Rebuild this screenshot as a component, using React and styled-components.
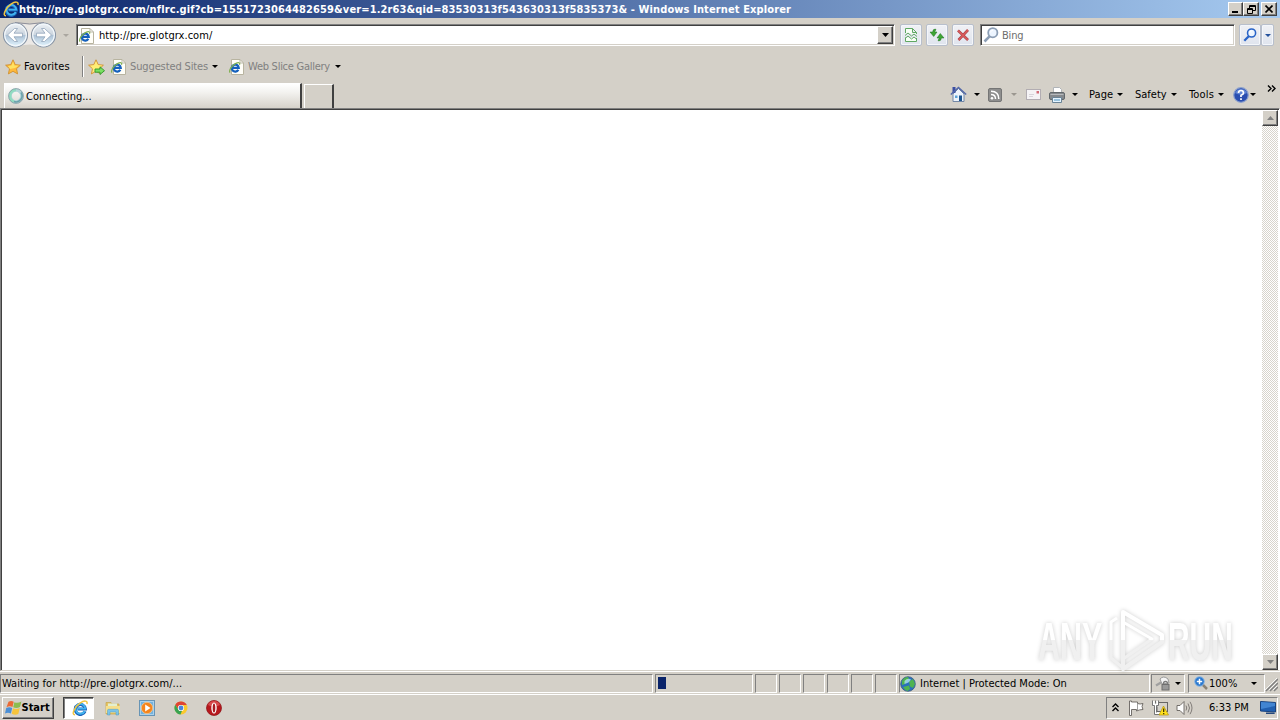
import React from 'react'
import styled, { createGlobalStyle } from 'styled-components'

const GlobalStyle = createGlobalStyle`
    * {
        box-sizing: border-box;
    }
    body {
        margin: 0;
        overflow: hidden;
        font-family: "DejaVu Sans Condensed", "DejaVu Sans", sans-serif;
        font-stretch: condensed;
        font-size: 11px;
        color: #000;
    }
    svg {
        display: block;
        flex: none;
    }
`
const Desktop = styled.div`
    width: 1280px;
    height: 720px;
    display: flex;
    flex-direction: column;
    background: #d4d0c8;
    overflow: hidden;
`
const Row = styled.div`
    display: flex;
    align-items: center;
`
const Label = styled.span`
    flex: none;
    white-space: pre;
    line-height: 14px;
    width: ${(props) => props.$width}px;
    letter-spacing: ${(props) => props.$spacing || 0}px;
    font-weight: ${(props) => (props.$bold ? 'bold' : 'normal')};
    color: ${(props) => props.$color || '#000'};
    margin-left: ${(props) => props.$left || 0}px;
    padding-top: ${(props) => props.$drop || 0}px;
`
const Slot = styled.span`
    flex: none;
    display: flex;
    margin-left: ${(props) => props.$left || 0}px;
    margin-top: ${(props) => props.$top || 0}px;
`
const Arrow = styled.span`
    flex: none;
    width: 0;
    height: 0;
    border: 3px solid transparent;
    border-bottom: 0;
    border-top-color: ${(props) => props.$color || '#000'};
    margin-left: ${(props) => props.$left || 0}px;
`

const TitleBar = styled(Row)`
    height: 18px;
    padding: 0 3px 0 3px;
    background: linear-gradient(90deg, #0a246a, #a6caf0);
`
const WindowButtons = styled(Row)`
    margin-left: auto;
`
const Classic = styled.span`
    flex: none;
    display: flex;
    align-items: center;
    justify-content: center;
    width: ${(props) => props.$width}px;
    height: ${(props) => props.$height}px;
    margin-left: ${(props) => props.$left || 0}px;
    background: #d4d0c8;
    border: 1px solid;
    border-color: #fff #404040 #404040 #fff;
    box-shadow: inset -1px -1px #808080;
`

const AddressRow = styled(Row)`
    height: 34px;
    padding-left: 2px;
`
const Field = styled(Row)`
    flex: none;
    width: ${(props) => props.$width}px;
    height: 22px;
    margin-left: ${(props) => props.$left}px;
    background: #fff;
    border: 1px solid;
    border-color: #808080 #fff #fff #808080;
    box-shadow: inset 1px 1px #404040, inset -1px -1px #d4d0c8;
`
const ToolButton = styled.span`
    flex: none;
    display: flex;
    align-items: center;
    justify-content: center;
    width: ${(props) => props.$width || 22}px;
    height: 22px;
    margin-left: ${(props) => props.$left || 0}px;
    border: 1px solid #b8bfcc;
    border-radius: 2px;
    background: linear-gradient(#f0f1f5, #dfe4ee);
    box-shadow: inset 0 0 0 1px #f4f6fa;
`

const FavoritesRow = styled(Row)`
    height: 29px;
    padding-left: 5px;
`
const Divider = styled.span`
    width: 2px;
    height: 21px;
    margin-left: 12px;
    background: linear-gradient(90deg, #808080 50%, #fff 50%);
`

const TabRow = styled.div`
    display: flex;
    align-items: flex-end;
    height: 27px;
    padding-left: 4px;
`
const Tab = styled(Row)`
    width: 298px;
    height: 25px;
    padding-left: 3px;
    background: linear-gradient(#fff, #f3f2ef 35%, #d6d2ca);
    border-top: 1px solid #fff;
    border-left: 1px solid #fff;
    border-right: 2px solid #404040;
`
const NewTab = styled.div`
    width: 30px;
    height: 24px;
    margin-left: 2px;
    border-top: 1px solid #fff;
    border-left: 1px solid #fff;
    border-right: 2px solid #404040;
`
const CommandBar = styled(Row)`
    height: 27px;
    margin-left: 616px;
`

const Viewport = styled.div`
    position: relative;
    display: flex;
    justify-content: flex-end;
    height: 563px;
    background: #fff;
    border: 1px solid;
    border-color: #808080 #fff #d4d0c8 #808080;
    box-shadow: inset 1px 1px #404040;
    padding: 1px 1px 0 0;
`
const ScrollTrack = styled.div`
    display: flex;
    flex-direction: column;
    justify-content: space-between;
    width: 16px;
    background: repeating-conic-gradient(#fff 0 25%, #d8d4cc 0 50%) 0 0 / 2px 2px;
`
const Watermark = styled.svg`
    position: absolute;
    left: 1029px;
    top: 494px;
    filter: drop-shadow(0 0 2px rgba(0, 0, 0, 0.2));
`

const StatusBar = styled(Row)`
    height: 24px;
    border-top: 1px solid #fff;
    border-bottom: 1px solid #fff;
`
const Pane = styled(Row)`
    flex: none;
    width: ${(props) => props.$width}px;
    height: 19px;
    margin-left: ${(props) => props.$left || 0}px;
    border: 1px solid;
    border-color: #808080 #fff #fff #808080;
`
const Progress = styled.span`
    width: 8px;
    height: 12px;
    margin-left: 2px;
    background: #0a246a;
`

const Taskbar = styled(Row)`
    height: 25px;
    padding: 0 2px;
`
const ActiveTask = styled.span`
    flex: none;
    display: flex;
    align-items: center;
    justify-content: center;
    width: 31px;
    height: 22px;
    margin-left: 9px;
    padding-left: 3px;
    background: #fff;
    border: 1px solid;
    border-color: #404040 #fff #fff #404040;
    box-shadow: inset 1px 1px #808080;
`
const Tray = styled(Row)`
    width: 172px;
    height: 22px;
    margin-left: auto;
    border: 1px solid;
    border-color: #808080 #fff #fff #808080;
`

const IeLetter = () => (
    <svg width="16" height="16" viewBox="0 0 16 16" fill="none">
        <path d="M13 11.200A5 5 0 1 1 13.300 9H5.500" stroke="#1b62b8" strokeWidth="3.200" />
        <path d="M12.800 11A4.900 4.900 0 1 1 13.300 8.700H5.500" stroke="#41b4ef" strokeWidth="1.800" />
        <path d="M3 14.800C-1 15 2.500 7 8 3.200 12 .4 16 .2 14.900 4" stroke="#f1c540" strokeWidth="1.500" />
    </svg>
)

const PageIcon = () => (
    <svg width="16" height="16" viewBox="0 0 16 16" fill="none">
        <path d="M2.500.5H11l3.500 3.500v11.500h-12z" fill="#fffef8" stroke="#b8b4a0" />
        <path d="M11 .5V4h3.500" stroke="#bbb9aa" />
        <path d="M9.300 10.800A3.500 3.500 0 1 1 9.700 8.800H3.500" stroke="#1560bd" strokeWidth="2.300" />
        <path d="M1.200 13.500C-.8 12.500 2.500 6.500 6.500 4.600c3-1.500 4.800-1.200 4 1.200" stroke="#7fb04f" strokeWidth="1.200" />
    </svg>
)

const NavButtons = () => (
    <svg width="56" height="28" viewBox="0 0 56 28" fill="none">
        <defs>
            <linearGradient id="glass" x1="0" y1="0" x2="0" y2="1">
                <stop offset="0" stopColor="#eef2f6" />
                <stop offset=".48" stopColor="#ccd5df" />
                <stop offset=".52" stopColor="#adc2d6" />
                <stop offset="1" stopColor="#e4f6ff" />
            </linearGradient>
        </defs>
        <path d="M13 1.500Q27 5 42 1.500L44 26Q27 21 13 26z" fill="#ece9e6" />
        <path d="M13 1.500q15 3 29 0" stroke="#8e8f9b" />
        {[13.5, 41.5].map((cx) => (
            <g key={cx}>
                <circle cx={cx} cy="14" r="12" fill="url(#glass)" stroke="#8995a5" strokeWidth="1.100" />
                <circle cx={cx} cy="14" r="10.800" stroke="#f2f7fb" strokeWidth="1.200" />
            </g>
        ))}
        <g fill="#fff" stroke="#92a5ba" strokeWidth=".8">
            <path d="M5.500 14l7-6.500h3l-3.500 4.700h8.500v3.600H12l3.500 4.700h-3z" />
            <path d="M49.500 14l-7-6.500h-3l3.500 4.700h-8.500v3.600H43l-3.500 4.700h3z" />
        </g>
    </svg>
)

const Star = ({ add }) => (
    <svg width="17" height="16" viewBox="0 0 17 16">
        <path d="M8 .8l2.200 4.800 5.200.6-3.900 3.500 1.100 5.200L8 12.300l-4.600 2.600 1.100-5.200L.6 6.200l5.200-.6z" fill={add ? '#ffe981' : '#ffb93b'} stroke="#cf9030" strokeWidth=".9" />
        <path d="M8 2.500l1.400 4H14l-4 2.500-5 1L3 7l3.500-.5z" fill="#fff06f" opacity=".75" />
        {add && <path d="M7 10h5V7.800l4.500 3.900-4.500 3.800v-2.300H7z" fill="#7be062" stroke="#2f9428" strokeWidth=".9" />}
    </svg>
)

const Spinner = () => (
    <svg width="16" height="16" viewBox="0 0 16 16" fill="none">
        <circle cx="8" cy="8" r="6" stroke="#b4d4d8" strokeWidth="3.600" />
        <path d="M8 2a6 6 0 0 0-2 11.600" stroke="#8fdcc0" strokeWidth="2.400" />
        <path d="M6 13.500A6 6 0 0 0 13 4.500" stroke="#6aa3ac" strokeWidth="1.600" />
        <circle cx="8" cy="8" r="7.400" stroke="#7f9299" strokeWidth=".7" />
    </svg>
)

const Magnifier = ({ color, size = 16 }) => (
    <svg width={size} height={size} viewBox="0 0 16 16" fill="none">
        <path d="M6.800 9.200L1.500 14.500" stroke={color} strokeWidth="2.600" />
        <circle cx="9.800" cy="5.700" r="4.600" fill="#edf5ff" stroke={color} strokeWidth="1.800" />
        <path d="M7.500 5.500q.2-2.200 2.500-2.300" stroke="#fff" />
    </svg>
)

const CompatIcon = () => (
    <svg width="14" height="16" viewBox="0 0 14 16" fill="none" stroke="#5fa863">
        <path d="M1.500 6V1.500h7l4 4V7M8.500 1.500v4h4M1.500 10.500v4h11V11" fill="#f8fff6" />
        <path d="M1 8.500l3-2.500 3.500 3L10 7l3 2.500M1 11.500l3-2.500 3.500 3L10 10l3 2.500" />
    </svg>
)

const RefreshIcon = () => (
    <svg width="16" height="14" viewBox="0 0 16 14" fill="#3fa534" stroke="#1d7320" strokeWidth=".5">
        <path d="M6.500 1Q3.700 1 3.700 4H1l3.700 4.500L8 4H5.800Q5.800 2.500 7 2z" />
        <path d="M9.500 13q2.800 0 2.800-3H15l-3.700-4.500L8 10h2.200q0 1.500-1.200 2z" />
    </svg>
)

const StopIcon = () => (
    <svg width="14" height="14" viewBox="0 0 14 14">
        <path d="M2 2.500L12 12M12 2L2.500 12" stroke="#a84448" strokeWidth="2.600" />
        <path d="M2 2.500L12 12M12 2L2.500 12" stroke="#dc5a5c" strokeWidth="1.500" />
    </svg>
)

const HomeIcon = () => (
    <svg width="17" height="17" viewBox="0 0 17 17">
        <path d="M3 8v7.500h11V8L8.500 2.500z" fill="#edf3fb" stroke="#7488a6" />
        <path d="M2.500 1h3v6h-3z" fill="#3b4ea3" />
        <path d="M.8 8.500l7.700-7 7.700 7" fill="none" stroke="#5267a8" strokeWidth="1.500" />
        <path d="M9 9.500h3V15H9z" fill="#1d5591" />
        <path d="M5 9.500h2.500V12H5z" fill="#5ca4d8" />
    </svg>
)

const FeedIcon = () => (
    <svg width="14" height="14" viewBox="0 0 14 14" fill="none">
        <rect x=".5" y=".5" width="13" height="13" rx="1.500" fill="#8e8e8e" stroke="#757575" />
        <circle cx="4" cy="10.300" r="1.300" fill="#fff" />
        <path d="M3 6.500q4.500 0 4.500 4.500M3 3.200q7.800 0 7.800 7.800" stroke="#fff" strokeWidth="1.500" />
    </svg>
)

const MailIcon = () => (
    <svg width="15" height="11" viewBox="0 0 15 11">
        <rect x=".5" y=".5" width="14" height="10" fill="#f5f3f5" stroke="#b2adb2" />
        <path d="M10.500 2h2.500v2.500h-2.500z" fill="#d26a76" />
        <path d="M3 5.500h5M3 7.500h4" stroke="#d8d4da" />
    </svg>
)

const PrinterIcon = () => (
    <svg width="16" height="16" viewBox="0 0 16 16">
        <path d="M4.500 7V.5h6l2 2V7" fill="#fff" stroke="#b0b4b8" />
        <rect x=".5" y="5.500" width="15" height="7" rx="1.500" fill="#85898d" stroke="#62686c" />
        <path d="M1.500 7.500h13" stroke="#b7babd" />
        <path d="M3.500 10.500h9v5h-9z" fill="#e5f4ff" stroke="#6b8496" />
        <path d="M5 13h6" stroke="#4c91bc" />
    </svg>
)

const HelpIcon = () => (
    <svg width="16" height="16" viewBox="0 0 16 16">
        <circle cx="8" cy="8" r="7.300" fill="#2a4eb0" stroke="#8da1cd" strokeWidth="1.200" />
        <path d="M2 6a6.500 6.500 0 0 1 12 0Q8 9 2 6z" fill="#5f84d4" />
        <path d="M5.500 6q0-2.500 2.500-2.500T10.500 6Q10.500 7.300 8 8.300V10M8 11.300v1.700" fill="none" stroke="#fff" strokeWidth="1.700" />
    </svg>
)

const Globe = () => (
    <svg width="16" height="16" viewBox="0 0 16 16">
        <circle cx="8" cy="8" r="7.300" fill="#2a6fbd" stroke="#3e5c7d" strokeWidth=".8" />
        <path d="M2 5q2-4 6-4l1 2-3 2-1 3-3 1zM9 5.500l4-2.500 2 5-2 4-3-1.500zM3 11l6-1.500 1 3.500-2.500 2q-3-1-4.500-4z" fill="#4fb350" />
        <path d="M4.500 5q3-3.500 6.500-1.500Q9 7 4.500 8z" fill="#b9e9f0" opacity=".75" />
    </svg>
)

const LockIcon = () => (
    <svg width="17" height="15" viewBox="0 0 17 15" fill="none">
        <path d="M5 3q3.500-4 8 0l1 4-7 1z" fill="#f4f4f4" stroke="#9a9a9a" />
        <path d="M1 9.500l5-3" stroke="#a0a0a0" strokeWidth="2.200" />
        <path d="M8.500 9V7.500q0-2 2-2t2 2V9" stroke="#7c7c7c" strokeWidth="1.300" />
        <rect x="7" y="8.500" width="7" height="5.500" fill="#999" stroke="#6f6f6f" />
    </svg>
)

const ZoomIcon = () => (
    <svg width="14" height="14" viewBox="0 0 14 14" fill="none">
        <path d="M8 8l5 5" stroke="#8b8274" strokeWidth="2.500" />
        <circle cx="5.500" cy="5.500" r="4.800" fill="#2a78cf" stroke="#8fb9e2" />
        <path d="M5.500 2.800v5.400M2.800 5.500h5.400" stroke="#fff" strokeWidth="1.500" />
    </svg>
)

const WindowsFlag = () => (
    <svg width="17" height="16" viewBox="0 0 17 16">
        <path d="M3.500 1.800q2.800-1.500 5.200 0L7.500 7q-2.800-1.500-6 .2z" fill="#ea6a35" />
        <path d="M9.400 2.200q3 1.500 7-.7L15 7q-3.500 1.800-6.800.3z" fill="#8cbd4e" />
        <path d="M1.200 8q3.200-1.700 6 0l-1.300 5.500Q3 12 0 13.500z" fill="#4b8fd6" />
        <path d="M8 8.300q3.200 1.500 6.800-.3L13.300 14q-3.300 1.500-6.600-.3z" fill="#f6c43c" />
    </svg>
)

const FolderIcon = () => (
    <svg width="16" height="16" viewBox="0 0 16 16">
        <path d="M1 2.500h5l1 1.500h7V14H1z" fill="#e6c463" stroke="#c5a64b" strokeWidth=".7" />
        <path d="M3 3.500h9V7H3z" fill="#e3efd0" />
        <path d="M1 6h14v7H1z" fill="#f5df8c" />
        <path d="M2.500 15v-4.500q0-1.200 1.200-1.200h8.600q1.200 0 1.200 1.200V15H11v-3H5v3z" fill="#7cc4e8" stroke="#4c9ac5" strokeWidth=".5" />
    </svg>
)

const PlayerIcon = () => (
    <svg width="16" height="16" viewBox="0 0 16 16">
        <rect x=".5" y=".5" width="15" height="15" fill="#a9d1ed" stroke="#6794b5" />
        <path d="M2 2h12v12H2z" fill="#74b2dd" />
        <circle cx="8" cy="8" r="5.700" fill="#f5841c" stroke="#fbc98b" strokeWidth=".8" />
        <path d="M6.200 4.500L11.500 8l-5.300 3.500z" fill="#fff" />
    </svg>
)

const ChromeIcon = () => (
    <svg width="14" height="14" viewBox="0 0 14 14">
        <circle cx="7" cy="7" r="6.500" fill="#fac92e" />
        <path d="M1.300 3.700A6.500 6.500 0 0 1 12.800 4H7a3 3 0 0 0-2.700 4.500z" fill="#df4434" />
        <path d="M1.300 3.700L4.300 8.500A3 3 0 0 0 8 9.800l-1.500 3.700A6.500 6.500 0 0 1 1.300 3.700z" fill="#38a352" />
        <circle cx="7" cy="7" r="3.100" fill="#fff" />
        <circle cx="7" cy="7" r="2.400" fill="#4a85dc" />
    </svg>
)

const OperaIcon = () => (
    <svg width="16" height="16" viewBox="0 0 16 16">
        <circle cx="8" cy="8" r="7.500" fill="#b7181d" stroke="#8c1014" strokeWidth=".7" />
        <path d="M2 5a6.500 6.500 0 0 1 12 0Q8 8 2 5z" fill="#d84a4c" />
        <ellipse cx="8" cy="8" rx="2.700" ry="5.500" fill="#fff" />
        <ellipse cx="8" cy="8" rx="1.300" ry="4.600" fill="#a81c21" />
    </svg>
)

const FlagIcon = () => (
    <svg width="17" height="16" viewBox="0 0 17 16">
        <path d="M1.500 1v14.500h2V9.500h5V11q3-1.500 6.500-1.500-2-3 0-6-3 1-5.500 0V2h-6V1z" fill="#fff" stroke="#66625e" strokeWidth=".9" />
        <path d="M9.500 3.500V10" stroke="#888" strokeWidth=".8" />
    </svg>
)

const NetworkIcon = () => (
    <svg width="17" height="16" viewBox="0 0 17 16">
        <rect x="5" y="2.500" width="10.500" height="9" fill="#d6d3cc" stroke="#666" />
        <path d="M1.500 1v4h4V1M3.500 5v8.500h5" fill="none" stroke="#fff" strokeWidth="2.500" />
        <path d="M.5.5v5h2v9H8M3.500.5v3M6.500.5v5h-2v7" fill="none" stroke="#555" strokeWidth=".8" />
        <path d="M11.500 6l5 9H7z" fill="#ffe11d" stroke="#b6940c" strokeWidth=".7" />
        <path d="M11.700 8.500v3.500M11.700 13v1.200" stroke="#332b00" strokeWidth="1.200" />
    </svg>
)

const SpeakerIcon = () => (
    <svg width="17" height="16" viewBox="0 0 17 16" fill="none">
        <path d="M1 5.500h3L8 1.500v13l-4-4H1z" fill="#fff" stroke="#66625e" strokeWidth=".9" />
        <path d="M10 5.500q1.500 2.500 0 5M12 3.500q3 4.500 0 9M14 1.800q4 6.200 0 12.400" stroke="#77736f" strokeWidth=".9" />
    </svg>
)

const MonitorIcon = () => (
    <svg width="16" height="14" viewBox="0 0 16 14">
        <path d="M.5.5L15.500 1.500V11L.5 10z" fill="#215fb0" stroke="#18427e" />
        <path d="M1 1l14 1v3L1 8z" fill="#4285d2" />
        <path d="M6 11.500h8l1 1.500H6z" fill="#25487c" />
    </svg>
)

const Brand = () => (
    <Watermark width="212" height="75" viewBox="1030 603 212 75">
        <defs>
            <linearGradient id="ink" gradientUnits="userSpaceOnUse" x1="0" y1="603" x2="0" y2="678">
                <stop offset=".49" stopColor="#fff" />
                <stop offset=".5" stopColor="#f0f0f0" />
                <stop offset="1" stopColor="#f0f0f0" />
            </linearGradient>
        </defs>
        <g fill="url(#ink)" fontFamily="Liberation Sans, sans-serif" fontSize="53" fontWeight="bold">
            <g transform="translate(1038 0) scale(.575 1)">
                <text y="660">ANY</text>
            </g>
            <g transform="translate(1168 0) scale(.565 1)">
                <text y="660">RUN</text>
            </g>
        </g>
        <g fill="none" stroke="url(#ink)" strokeLinejoin="round">
            <path d="M1123 612l39 23v7l-39 27z" strokeWidth="4" />
            <path d="M1117 618l-6 4v36l11 9M1123 622l29 17-29 20" strokeWidth="3" />
        </g>
    </Watermark>
)

const App = () => {
    return (
        <Desktop>
            <GlobalStyle />
            <TitleBar>
                <IeLetter />
                <Label $bold $color="#fff" $width={790} $spacing={0.115} $drop={1}>http://pre.glotgrx.com/nflrc.gif?cb=1551723064482659&amp;ver=1.2r63&amp;qid=83530313f543630313f5835373&amp; - Windows Internet Explorer</Label>
                <WindowButtons>
                    <Classic $width={15} $height={14}>
                        <svg width="9" height="8"><path d="M1 6h6v2H1z" /></svg>
                    </Classic>
                    <Classic $width={16} $height={14}>
                        <svg width="9" height="9" fill="none" stroke="#000"><path d="M2.500 3V.5h6v5H6M2 1.500h7M.5 3.500h5v5h-5zM0 4.500h6" /></svg>
                    </Classic>
                    <Classic $width={16} $height={14} $left={2}>
                        <svg width="8" height="8"><path d="M.5.5l7 7M7.500.5l-7 7" stroke="#000" strokeWidth="1.600" /></svg>
                    </Classic>
                </WindowButtons>
            </TitleBar>
            <AddressRow>
                <NavButtons />
                <Arrow $left={5} $color="#aaa69f" />
                <Field $width={819} $left={7}>
                    <Slot $left={2} $top={1}><PageIcon /></Slot>
                    <Label $left={4} $width={778} $spacing={0.05} $drop={2}>http://pre.glotgrx.com/</Label>
                    <Classic $width={16} $height={18}>
                        <svg width="7" height="4"><path d="M0 0h7L3.500 4z" /></svg>
                    </Classic>
                </Field>
                <ToolButton $left={5}><CompatIcon /></ToolButton>
                <ToolButton $left={4}><RefreshIcon /></ToolButton>
                <ToolButton $left={4}><StopIcon /></ToolButton>
                <Field $width={255} $left={6}>
                    <Slot $left={2}><Magnifier color="#8c9eb5" /></Slot>
                    <Label $left={3} $color="#6d6d6d" $spacing={-0.2} $drop={2}>Bing</Label>
                </Field>
                <ToolButton $left={4}><Magnifier color="#2863c7" size={14} /></ToolButton>
                <ToolButton $width={13}><Arrow $color="#24519c" /></ToolButton>
            </AddressRow>
            <FavoritesRow>
                <Star />
                <Label $left={2} $width={46} $spacing={0.12}>Favorites</Label>
                <Divider />
                <Slot $left={4}><Star add /></Slot>
                <Slot $left={6}><PageIcon /></Slot>
                <Label $left={3} $width={79} $color="#808080" $spacing={-0.12} $drop={1}>Suggested Sites</Label>
                <Arrow $left={3} />
                <Slot $left={11}><PageIcon /></Slot>
                <Label $left={3} $width={84} $color="#808080" $spacing={-0.26} $drop={1}>Web Slice Gallery</Label>
                <Arrow $left={3} />
            </FavoritesRow>
            <TabRow>
                <Tab>
                    <Spinner />
                    <Label $left={2} $drop={1}>Connecting...</Label>
                </Tab>
                <NewTab />
                <CommandBar>
                    <HomeIcon />
                    <Arrow $left={7} />
                    <Slot $left={8}><FeedIcon /></Slot>
                    <Arrow $left={9} $color="#9b9790" />
                    <Slot $left={9}><MailIcon /></Slot>
                    <Slot $left={8}><PrinterIcon /></Slot>
                    <Arrow $left={7} />
                    <Label $left={11} $width={26} $spacing={0.1}>Page</Label>
                    <Arrow $left={2} />
                    <Label $left={12} $width={34}>Safety</Label>
                    <Arrow $left={2} />
                    <Label $left={12} $width={27} $spacing={0.15}>Tools</Label>
                    <Arrow $left={2} />
                    <Slot $left={9}><HelpIcon /></Slot>
                    <Arrow $left={1} />
                    <Slot $left={11} $top={-13}>
                        <svg width="9" height="7" fill="none" stroke="#000" strokeWidth="1.400"><path d="M1 .5l3 3-3 3M5 .5l3 3-3 3" /></svg>
                    </Slot>
                </CommandBar>
            </TabRow>
            <Viewport>
                <ScrollTrack>
                    <Classic $width={16} $height={16}>
                        <svg width="7" height="4"><path d="M0 4h7L3.500 0z" fill="#808080" /></svg>
                    </Classic>
                    <Classic $width={16} $height={16}>
                        <svg width="7" height="4"><path d="M0 0h7L3.500 4z" fill="#808080" /></svg>
                    </Classic>
                </ScrollTrack>
                <Brand />
            </Viewport>
            <StatusBar>
                <Pane $width={653}><Label $left={1} $spacing={0.04} $drop={2}>Waiting for http://pre.glotgrx.com/...</Label></Pane>
                <Pane $width={98} $left={2}><Progress /></Pane>
                {[0, 1, 2, 3, 4, 5].map((pane) => (
                    <Pane key={pane} $width={22} $left={2} />
                ))}
                <Pane $width={251} $left={2}>
                    <Slot $top={1}><Globe /></Slot>
                    <Label $left={4} $drop={2}>Internet | Protected Mode: On</Label>
                </Pane>
                <Pane $width={34} $left={1}>
                    <Slot $left={3}><LockIcon /></Slot>
                    <Arrow $left={3} />
                </Pane>
                <Pane $width={77} $left={3}>
                    <Slot $left={5}><ZoomIcon /></Slot>
                    <Label $left={1} $width={30} $drop={2}>100%</Label>
                    <Arrow $left={12} />
                </Pane>
                <svg width="13" height="18" viewBox="0 0 13 18" strokeWidth="1.500">
                    <path d="M1 17L13 5M5 17l8-8M9 17l4-4" stroke="#808080" />
                    <path d="M0 16L12 4M4 16l8-8M8 16l4-4" stroke="#fff" strokeWidth=".8" />
                </svg>
            </StatusBar>
            <Taskbar>
                <Classic $width={52} $height={22}>
                    <WindowsFlag />
                    <Label $bold $width={30}>Start</Label>
                </Classic>
                <ActiveTask><IeLetter /></ActiveTask>
                <Slot $left={11}><FolderIcon /></Slot>
                <Slot $left={18}><PlayerIcon /></Slot>
                <Slot $left={19}><ChromeIcon /></Slot>
                <Slot $left={18}><OperaIcon /></Slot>
                <Tray>
                    <Slot $left={5}>
                        <svg width="7" height="9" fill="none" stroke="#000" strokeWidth="1.400"><path d="M.5 4l3-3 3 3M.5 8l3-3 3 3" /></svg>
                    </Slot>
                    <Slot $left={9}><FlagIcon /></Slot>
                    <Slot $left={7}><NetworkIcon /></Slot>
                    <Slot $left={7}><SpeakerIcon /></Slot>
                    <Label $left={16} $width={41}>6:33 PM</Label>
                    <Slot $left={10}><MonitorIcon /></Slot>
                </Tray>
            </Taskbar>
        </Desktop>
    )
}

export default App
